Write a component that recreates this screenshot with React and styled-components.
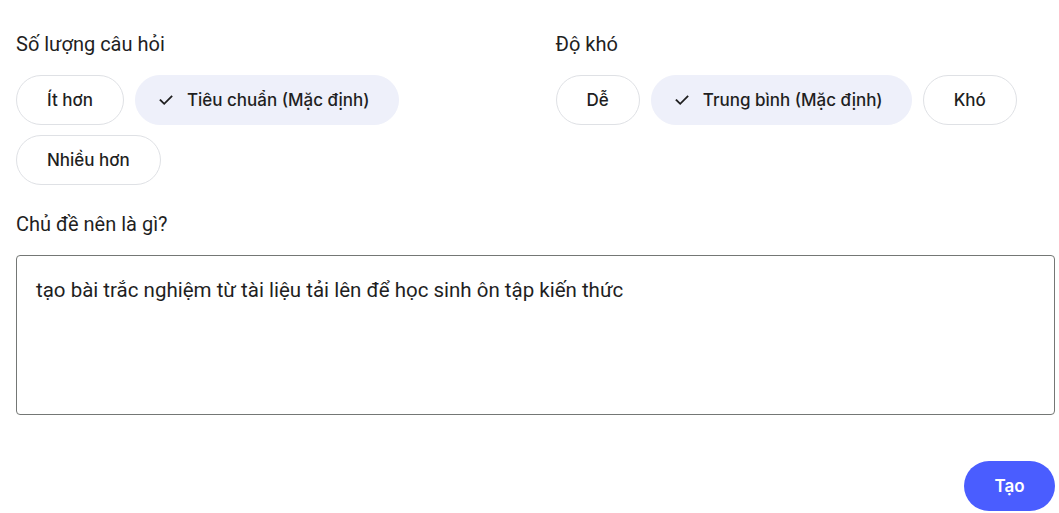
import React from "react";
import styled, { createGlobalStyle } from "styled-components";

const Global = createGlobalStyle`
  html, body { margin: 0; padding: 0; background: #ffffff; }
  body { font-family: Roboto, "Noto Sans", Arial, sans-serif; color: #1f1f1f; }
  * { box-sizing: border-box; }
`;

const Page = styled.div`
  padding: 32px 4px 2px 16px;
  display: flex;
  flex-direction: column;
`;

const Columns = styled.div`
  display: grid;
  grid-template-columns: 1fr 1fr;
  column-gap: 40px;
`;

const Section = styled.div`
  display: flex;
  flex-direction: column;
`;

const Label = styled.div`
  font-family: Roboto, Arial, sans-serif;
  font-size: 20px;
  line-height: 24px;
  color: #1f1f1f;
  margin-bottom: 19px;
`;

const ChipRow = styled.div`
  display: flex;
  flex-wrap: wrap;
  gap: 10px 11px;
`;

const Chip = styled.button`
  display: inline-flex;
  align-items: center;
  gap: 14px;
  height: 50px;
  padding: 0 ${(p) => (p.$selected ? "28px" : "30px")} 0 ${(p) => (p.$selected ? "23px" : "30px")};
  border-radius: 25px;
  border: 1px solid ${(p) => (p.$selected ? "#eef0fa" : "#dfe1e5")};
  background: ${(p) => (p.$selected ? "#eef0fa" : "#ffffff")};
  font-family: Inter, Roboto, Arial, sans-serif;
  font-size: 17px;
  font-weight: 500;
  color: #1f1f1f;
  cursor: pointer;
  white-space: nowrap;
`;

const Check = styled.svg`
  width: 14px;
  height: 14px;
  flex: none;
`;

const TopicSection = styled.div`
  display: flex;
  flex-direction: column;
  margin-top: 27px;
`;

const TopicLabel = styled(Label)`
  margin-bottom: 19px;
`;

const TextArea = styled.textarea`
  width: 100%;
  height: 160px;
  border: 1px solid #747775;
  border-radius: 4px;
  padding: 22px 19px;
  font-family: Roboto, Arial, sans-serif;
  font-size: 20.5px;
  line-height: 24px;
  color: #1f1f1f;
  resize: none;
  outline: none;
  background: #fff;
`;

const Footer = styled.div`
  display: flex;
  justify-content: flex-end;
  margin-top: 46px;
`;

const PrimaryButton = styled.button`
  height: 50px;
  width: 91px;
  border: none;
  border-radius: 25px;
  background: #4a5dff;
  color: #ffffff;
  font-family: Inter, Roboto, Arial, sans-serif;
  font-size: 17px;
  font-weight: 600;
  cursor: pointer;
`;

const CheckIcon = () => (
  <Check viewBox="0 0 14 14" fill="none">
    <path d="M1.5 7.2 L5.2 10.8 L12.5 3.5" stroke="#1f1f1f" strokeWidth="1.8" strokeLinecap="square" />
  </Check>
);

const ChipGroup = ({ options, selected }) => (
  <ChipRow>
    {options.map((o) => (
      <Chip key={o} $selected={o === selected}>
        {o === selected && <CheckIcon />}
        {o}
      </Chip>
    ))}
  </ChipRow>
);

export default function App() {
  return (
    <>
      <Global />
      <Page>
        <Columns>
          <Section>
            <Label>Số lượng câu hỏi</Label>
            <ChipGroup
              options={["Ít hơn", "Tiêu chuẩn (Mặc định)", "Nhiều hơn"]}
              selected="Tiêu chuẩn (Mặc định)"
            />
          </Section>
          <Section>
            <Label>Độ khó</Label>
            <ChipGroup
              options={["Dễ", "Trung bình (Mặc định)", "Khó"]}
              selected="Trung bình (Mặc định)"
            />
          </Section>
        </Columns>
        <TopicSection>
          <TopicLabel>Chủ đề nên là gì?</TopicLabel>
          <TextArea defaultValue="tạo bài trắc nghiệm từ tài liệu tải lên để học sinh ôn tập kiến thức" />
        </TopicSection>
        <Footer>
          <PrimaryButton>Tạo</PrimaryButton>
        </Footer>
      </Page>
    </>
  );
}
